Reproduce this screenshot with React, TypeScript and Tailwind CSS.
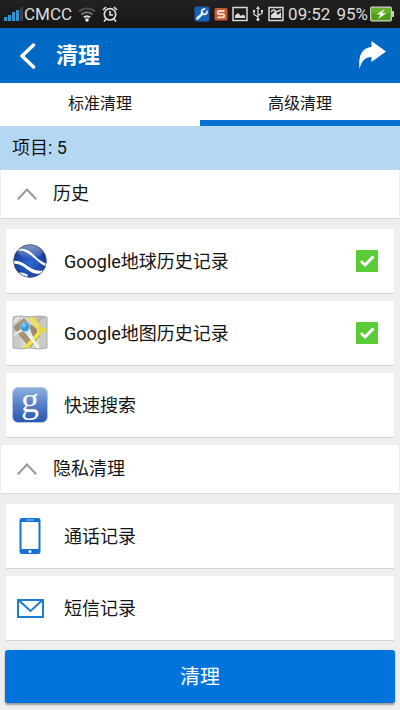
import { useState, type ReactNode } from "react";

function StatusBar() {
  return (
    <div className="flex h-7 items-center bg-gradient-to-b from-[#222222] to-[#151515] pr-1.5 pl-1 text-[17px] leading-7 text-[#dedede]">
      <svg className="h-4 w-5 shrink-0" viewBox="0 0 20 16" aria-hidden="true">
        <path d="M0 11h3v4H0zM4 9h3v6H4zM8 6h3v9H8zM12 4h3v11h-3z" fill="#2f93cf" />
        <path d="M16 1h3v14h-3z" fill="#3c3f42" />
      </svg>
      <span>CMCC</span>
      <svg className="ml-1.5 h-4 w-[18px] shrink-0" viewBox="0 0 18 16" fill="none" aria-hidden="true">
        <path d="M1 5.500c4.500-4 11.500-4 16 0" stroke="#4c4c4c" strokeWidth="2" />
        <path d="M3.500 8.500c3-3 8-3 11 0" stroke="#777" strokeWidth="2" />
        <path d="M6 11.500c1.700-1.800 4.300-1.800 6 0" stroke="#ddd" strokeWidth="2" />
        <circle cx="9" cy="14" r="1.800" fill="#eee" />
      </svg>
      <svg className="ml-1.5 h-4 w-4 shrink-0" viewBox="0 0 16 16" fill="none" stroke="#e3e3e3" strokeWidth="1.600" aria-hidden="true">
        <circle cx="8" cy="8.300" r="5.700" />
        <path d="M8 5v4h3M1 4l3-3M15 4l-3-3M4 13l-2 2.500M12 13l2 2.500" />
      </svg>
      <div className="ml-auto flex items-center gap-1">
        <svg className="h-4 w-4" viewBox="0 0 16 16" aria-hidden="true">
          <rect x="0.500" y="0.500" width="15" height="15" rx="2" fill="#1660b5" />
          <path d="M3.300 12.700 8.500 7.500" stroke="#e5efff" strokeWidth="2.500" strokeLinecap="round" />
          <circle cx="10.300" cy="5.700" r="2.600" fill="none" stroke="#e5efff" strokeWidth="1.800" />
          <path d="m10.300 5.700 3.500-3.500" stroke="#1660b5" strokeWidth="2" />
        </svg>
        <svg className="h-4 w-3.5" viewBox="0 0 14 16" aria-hidden="true">
          <rect x="0.500" y="2" width="13" height="12.500" rx="1.500" fill="#c55a36" />
          <path d="M10.500 5H5.300Q3.700 5 3.700 6.600t1.600 1.600h3.400q1.600 0 1.600 1.600t-1.600 1.600H3.500" stroke="#f7ddd2" strokeWidth="1.800" fill="none" />
        </svg>
        <svg className="h-4 w-4" viewBox="0 0 16 16" aria-hidden="true">
          <rect x="1" y="1.500" width="14" height="13" fill="none" stroke="#d8d8d8" strokeWidth="1.500" />
          <path d="M3 12V9.500L6 7l3 3 2-1.500 2 1.500v2z" fill="#ddd" />
        </svg>
        <svg className="h-4 w-3" viewBox="0 0 12 16" fill="none" stroke="#ddd" strokeWidth="1.200" aria-hidden="true">
          <path d="M6 2v11M6 11 2 8.500V5.500M6 9.500l4-2V5" />
          <path d="M6 0 4 3h4z" fill="#ddd" stroke="none" />
          <circle cx="6" cy="13.500" r="1.500" fill="#ddd" stroke="none" />
          <circle cx="2" cy="5" r="1.200" fill="#ddd" stroke="none" />
          <path d="M9 4h2v2H9z" fill="#ddd" stroke="none" />
        </svg>
        <svg className="h-4 w-4" viewBox="0 0 16 16" aria-hidden="true">
          <rect x="1" y="1.500" width="14" height="13" fill="none" stroke="#d8d8d8" strokeWidth="1.500" />
          <path d="M3 12V9l4-3.500L10 9l3-3v6z" fill="#ddd" />
          <path d="M3 6q3-4 5 0l5-2M9 12l2-3 2 3" stroke="#ddd" strokeWidth="1.400" fill="none" />
        </svg>
        <span className="mr-0.5">09:52</span>
        <span className="mr-0.5">95%</span>
      </div>
      <svg className="h-4 w-6 shrink-0" viewBox="0 0 24 16" aria-hidden="true">
        <rect x="0.700" y="1.200" width="20.600" height="13.600" rx="1" fill="#4f9d17" stroke="#d1d8ca" strokeWidth="1.200" />
        <path d="M1.500 2h19v5h-19z" fill="#65b327" />
        <path d="M22 5h2v6h-2z" fill="#c7c7c7" />
        <path d="M14.500 3 6.500 8.500h4L8 13l8.500-5.800H12z" fill="#fff" />
      </svg>
    </div>
  );
}

function EarthIcon() {
  return (
    <svg className="size-9" viewBox="0 0 36 36" aria-hidden="true">
      <defs>
        <radialGradient id="globe" cx="50%" cy="55%" r="55%">
          <stop offset="0" stopColor="#2e68d0" />
          <stop offset="0.700" stopColor="#1d4aac" />
          <stop offset="1" stopColor="#183273" />
        </radialGradient>
        <linearGradient id="shine" x1="0" y1="0" x2="0" y2="1">
          <stop offset="0" stopColor="#fff" stopOpacity="0.500" />
          <stop offset="1" stopColor="#fff" stopOpacity="0.050" />
        </linearGradient>
        <clipPath id="globe-edge"><circle cx="18" cy="18" r="16.500" /></clipPath>
      </defs>
      <circle cx="18" cy="18" r="16.500" fill="url(#globe)" />
      <g clipPath="url(#globe-edge)">
        <path d="M3 9C10 5 16 10 21 14s8 8 15 10v-3c-7-2-10-5-14-9S13 5 6 6z" fill="#fff" />
        <path d="M0 18c8-1 12 3 17 6s10 5 17 3l-3 3c-7 2-11 0-15-3S7 20 1 21z" fill="#fff" />
        <path d="M6 30c4-1 7 0 10 2l-1 3-8-3z" fill="#edf4ff" />
        <ellipse cx="18" cy="8" rx="13" ry="7" fill="url(#shine)" />
      </g>
      <circle cx="18" cy="18" r="16.300" fill="none" stroke="#42547a" strokeWidth="0.700" />
    </svg>
  );
}

function MapsIcon() {
  return (
    <svg className="size-9" viewBox="0 0 36 36" aria-hidden="true">
      <defs><clipPath id="sheet"><path d="m1 2 8-1 9 1 9-1 8 1v31l-8 1-9-1-9 1-8-1z" /></clipPath></defs>
      <g clipPath="url(#sheet)">
        <path d="M0 0h36v36H0z" fill="#d8d8d1" />
        <path d="m1 12 11-9 16 18-10 12-7-8z" fill="#a69375" />
        <path d="m13 0 11 11 11-11z" fill="#c6bfb0" />
        <path d="m19 9 8 7-7 9z" fill="#9d8a6c" />
        <path d="m17 0 10 13v5L12 35M27 15h9" stroke="#efe545" strokeWidth="4" fill="none" />
        <path d="m0 21 12-7 17 22M0 9l8-8" stroke="#f6f6f3" strokeWidth="2.500" fill="none" />
        <path d="M9 0v36L1 33V2zM27 0v36l8-3V2z" fill="#777" opacity="0.120" />
      </g>
      <path d="m1 2 8-1 9 1 9-1 8 1v31l-8 1-9-1-9 1-8-1z" fill="none" stroke="#aaa" />
      <path d="m9 15 13 9-5-12z" fill="#dcecf2" />
      <circle cx="13" cy="12" r="4.500" fill="#359bd7" stroke="#8ccce9" />
      <circle cx="12" cy="10.500" r="2" fill="#7dc9ef" />
    </svg>
  );
}

function SearchIcon() {
  return (
    <span
      aria-hidden="true"
      className="flex size-9 justify-center rounded-md border border-[#b4c7e4] bg-linear-to-b from-[#90afdf] via-[#527fc9] to-[#2858ae] font-['Liberation_Serif',serif] text-4xl leading-6 text-white"
    >
      g
    </span>
  );
}

function PhoneIcon() {
  return (
    <svg className="size-9" viewBox="0 0 36 36" aria-hidden="true">
      <rect x="7.500" y="0" width="21" height="36" rx="2.500" fill="#1273d2" />
      <path d="M9.500 4h17v27h-17z" fill="#fff" />
      <path d="M14 2h8" stroke="#9dcaf2" />
      <circle cx="18" cy="33.500" r="1.500" fill="#fff" />
    </svg>
  );
}

function MailIcon() {
  return (
    <svg className="size-9" viewBox="0 0 36 36" fill="none" stroke="#1e7bd5" strokeWidth="2" aria-hidden="true">
      <path d="M6 10h25v17H6zM7 10.500 18.500 21 30 10.500" />
    </svg>
  );
}

function Section({ title, children }: { title: string; children: ReactNode }) {
  const [open, setOpen] = useState(true);
  return (
    <section>
      <h2 className="mx-px">
        <button
          type="button"
          aria-expanded={open}
          onClick={() => setOpen(!open)}
          className="flex h-[49px] w-full items-center border-b border-[#d8d8d8] bg-white pl-4 text-left"
        >
          <svg className={`h-3 w-5 ${open ? "" : "rotate-180"}`} viewBox="0 0 20 12" fill="none" stroke="#999" strokeWidth="2" aria-hidden="true">
            <path d="M.8 11.200 10 1.500l9.200 9.700" />
          </svg>
          <span className="ml-4">{title}</span>
        </button>
      </h2>
      {open && <ul className="flex flex-col gap-[7px] px-1.5 pt-2.5 pb-[7px]">{children}</ul>}
    </section>
  );
}

const card = "flex h-[65px] items-center border-b border-[#d2d2d2] bg-white pr-4 pl-1.5";

function Item({ icon, name }: { icon: ReactNode; name: string }) {
  return (
    <li className={card}>
      {icon}
      <span className="ml-4 pt-0.5">{name}</span>
    </li>
  );
}

function CheckItem({ icon, name }: { icon: ReactNode; name: string }) {
  return (
    <li>
      <label className={card}>
        {icon}
        <span className="mr-auto ml-4 pt-0.5">{name}</span>
        <span className="grid">
          <input
            type="checkbox"
            defaultChecked
            className="peer col-start-1 row-start-1 size-[22px] appearance-none rounded-[1px] border border-gray-300 bg-white checked:border-[#5acb35] checked:bg-[#5acb35]"
          />
          <svg className="pointer-events-none col-start-1 row-start-1 size-[22px] opacity-0 peer-checked:opacity-100" viewBox="0 0 22 22" fill="none" stroke="#fff" strokeWidth="3" aria-hidden="true">
            <path d="m5 11 4 4 8.500-8.500" />
          </svg>
        </span>
      </label>
    </li>
  );
}

export default function App() {
  const [tab, setTab] = useState(1);
  return (
    <div className="flex min-h-screen flex-col bg-[#eeeeee] font-[Roboto,'Noto_Sans_CJK_SC',sans-serif] text-lg leading-6 text-[#141414]">
      <StatusBar />
      <header className="flex h-[55px] items-center bg-[#0069c5] pr-3.5 pl-5 text-white">
        <button type="button" aria-label="返回">
          <svg className="h-7 w-4" viewBox="0 0 16 28" fill="none" stroke="#fff" strokeWidth="3.500" strokeLinecap="round" strokeLinejoin="round" aria-hidden="true">
            <path d="M13.500 3 2 14l11.500 11" />
          </svg>
        </button>
        <h1 className="ml-5 text-[22px] font-bold">清理</h1>
        <button type="button" aria-label="分享" className="ml-auto">
          <svg className="h-[30px] w-7" viewBox="0 0 28 30" fill="#fff" aria-hidden="true">
            <path d="M13.500 0v6C4.500 7 0 13 1.500 28 3.500 20 7 16 13.500 16v5L28 10.500z" />
          </svg>
        </button>
      </header>
      <div role="tablist" className="grid h-[43px] grid-cols-2 bg-white text-base">
        {["标准清理", "高级清理"].map((name, i) => (
          <button
            key={name}
            type="button"
            role="tab"
            aria-selected={tab === i}
            onClick={() => setTab(i)}
            className={`border-b-[6px] pt-1 ${tab === i ? "border-[#0a6fd0]" : "border-transparent"}`}
          >
            {name}
          </button>
        ))}
      </div>
      <p className="flex h-11 items-center bg-[#b4d7f4] px-3">项目: 5</p>
      <main>
        <Section title="历史">
          <CheckItem icon={<EarthIcon />} name="Google地球历史记录" />
          <CheckItem icon={<MapsIcon />} name="Google地图历史记录" />
          <Item icon={<SearchIcon />} name="快速搜索" />
        </Section>
        <Section title="隐私清理">
          <Item icon={<PhoneIcon />} name="通话记录" />
          <Item icon={<MailIcon />} name="短信记录" />
        </Section>
      </main>
      <div className="px-[5px] pt-0.5 pb-[7px]">
        <button type="button" className="h-[53px] w-full rounded-[3px] bg-[#0073dc] text-xl text-white shadow-[0_2px_2px_#999]">
          清理
        </button>
      </div>
    </div>
  );
}
